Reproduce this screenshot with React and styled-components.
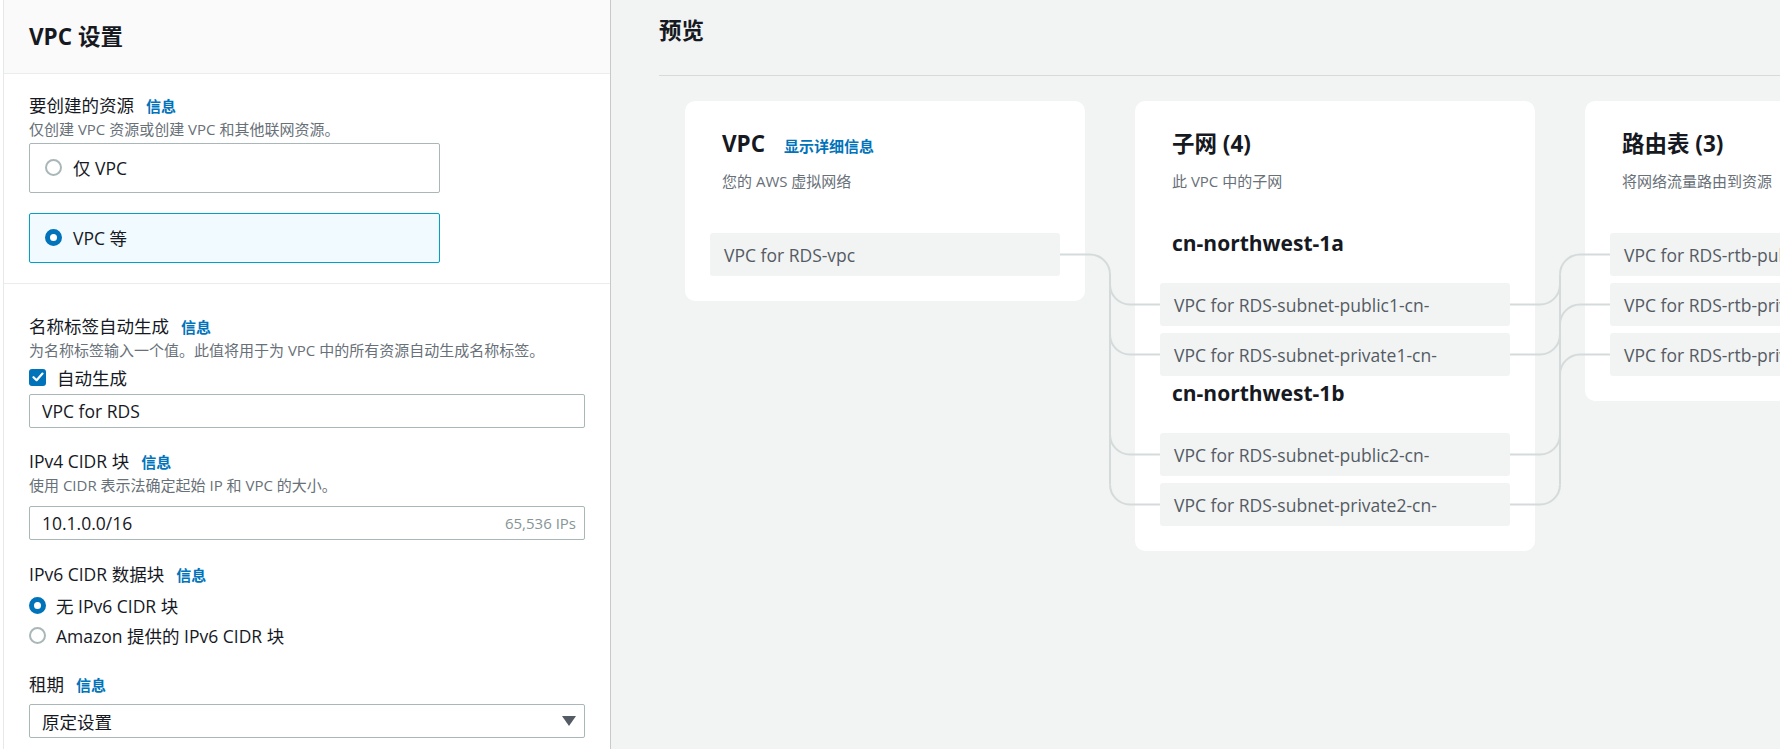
import React from 'react';
import styled, { createGlobalStyle } from 'styled-components';

const GlobalStyle = createGlobalStyle`
  html, body { margin: 0; padding: 0; background: #ffffff; }
  body {
    font-family: "Open Sans", "Noto Sans CJK SC", sans-serif;
    color: #16191f;
  }
  * { box-sizing: border-box; }
`;

const Page = styled.div`
  display: flex;
  width: 1780px;
  height: 749px;
  overflow: hidden;
  padding-left: 3px;
  background: #ffffff;
`;

/* ---------- left form panel ---------- */

const LeftPanel = styled.div`
  width: 608px;
  flex-shrink: 0;
  display: flex;
  flex-direction: column;
  background: #ffffff;
  border-left: 1px solid #e6e9eb;
  border-right: 1px solid #c6cacd;
`;

const PanelHeader = styled.div`
  height: 74px;
  flex-shrink: 0;
  display: flex;
  align-items: center;
  padding: 0 25px;
  background: #fafafa;
  border-bottom: 1px solid #eaeded;
`;

const Heading = styled.h2`
  margin: 0;
  font-size: 22.5px;
  line-height: 30px;
  font-weight: 700;
  color: #16191f;
`;

const Section = styled.div`
  padding: ${(p) => p.$top}px 25px ${(p) => p.$bottom}px;
  border-bottom: ${(p) => (p.$divided ? '1px solid #eaeded' : 'none')};
  display: flex;
  flex-direction: column;
`;

const Field = styled.div`
  display: flex;
  flex-direction: column;
  margin-top: ${(p) => p.$gap || 0}px;
`;

const LabelRow = styled.div`
  display: flex;
  align-items: baseline;
  height: 22px;
`;

const Label = styled.span`
  font-size: 17.5px;
  line-height: 22px;
  color: #16191f;
`;

const InfoLink = styled.a`
  margin-left: 12px;
  font-size: 15px;
  line-height: 22px;
  font-weight: 700;
  color: #0073bb;
  text-decoration: none;
`;

const Desc = styled.div`
  margin-top: 2px;
  font-size: 15px;
  line-height: 22px;
  color: #687078;
`;

const TileGroup = styled.div`
  display: flex;
  flex-direction: column;
  gap: 20px;
  margin-top: 3px;
`;

const Tile = styled.div`
  width: 411px;
  height: 50px;
  display: flex;
  align-items: center;
  gap: 11px;
  padding-left: 15px;
  padding-bottom: 2px;
  border: 1px solid ${(p) => (p.$selected ? '#00a1c9' : '#aab7b8')};
  background: ${(p) => (p.$selected ? '#f1faff' : '#ffffff')};
  border-radius: 2px;
  font-size: 17.5px;
  color: #16191f;
`;

const RadioDot = styled.span`
  width: 17px;
  height: 17px;
  flex-shrink: 0;
  border-radius: 50%;
  background: #ffffff;
  border: ${(p) => (p.$checked ? '5px solid #0073bb' : '2px solid #aab7b8')};
`;

const ChoiceRow = styled.div`
  display: flex;
  align-items: center;
  gap: ${(p) => p.$gap || 10}px;
  height: 22px;
  margin-top: ${(p) => p.$top || 0}px;
  font-size: 17.5px;
  color: #16191f;
`;

const CheckBox = styled.span`
  width: 17px;
  height: 17px;
  flex-shrink: 0;
  border-radius: 3px;
  background: #0073bb;
  display: flex;
  align-items: center;
  justify-content: center;
`;

const InputBox = styled.div`
  width: 100%;
  height: 34px;
  margin-top: ${(p) => p.$top || 0}px;
  display: flex;
  align-items: center;
  justify-content: space-between;
  padding: 0 8px 0 12px;
  border: 1px solid #aab7b8;
  border-radius: 2px;
  background: #ffffff;
`;

const InputText = styled.input`
  flex: 1;
  min-width: 0;
  border: none;
  outline: none;
  padding: 0;
  background: transparent;
  font-family: inherit;
  font-size: 17.5px;
  color: #16191f;
`;

const Suffix = styled.span`
  font-size: 15px;
  color: #879596;
`;

const SelectText = styled.span`
  font-size: 17.5px;
  color: #16191f;
`;

/* ---------- right preview panel ---------- */

const RightPanel = styled.div`
  flex: 1;
  min-width: 0;
  background: #f2f3f3;
  padding-left: 48px;
  overflow: hidden;
`;

const PreviewHeader = styled.div`
  padding: 16px 0 29px;
  border-bottom: 1px solid #d5dbdb;
`;

const Canvas = styled.div`
  position: relative;
  display: flex;
  align-items: flex-start;
  gap: 50px;
  padding: 25px 0 0 26px;
`;

const Wires = styled.svg`
  position: absolute;
  left: 0;
  top: 0;
  overflow: visible;
  pointer-events: none;
`;

const Card = styled.div`
  width: 400px;
  flex-shrink: 0;
  background: #ffffff;
  border-radius: 10px;
  padding: 28px 25px 25px;
`;

const CardHead = styled.div`
  padding: 0 12px;
`;

const TitleRow = styled.div`
  display: flex;
  align-items: baseline;
`;

const DetailLink = styled.a`
  margin-left: 19px;
  font-size: 15px;
  font-weight: 700;
  color: #0073bb;
  text-decoration: none;
`;

const CardDesc = styled.div`
  margin-top: 12px;
  font-size: 15px;
  line-height: 20px;
  color: #687078;
`;

const CardBody = styled.div`
  margin-top: 42px;
  display: flex;
  flex-direction: column;
  gap: 7px;
`;

const ZoneTitle = styled.div`
  padding-left: 12px;
  margin-bottom: 23px;
  font-size: 21px;
  line-height: 20px;
  font-weight: 700;
  color: #16191f;
`;

const Item = styled.div`
  height: 43px;
  display: flex;
  align-items: center;
  padding: 0 14px;
  background: #f2f3f3;
  border-radius: 3px;
  font-size: 17.5px;
  color: #545b64;
  white-space: nowrap;
  overflow: hidden;
`;

/* ---------- connector geometry (canvas coords) ---------- */
const R = 20;
const VPC_Y = [178.5];
const SUBNET_Y = [228.5, 278.5, 378.5, 428.5];
const ROUTE_Y = [178.5, 228.5, 278.5];
const X1 = { from: 401, bus: 451, to: 501 };
const X2 = { from: 851, bus: 901, to: 951 };

function buildPaths() {
  const p = [];
  const vy = VPC_Y[0];
  const lastSub = SUBNET_Y[SUBNET_Y.length - 1];
  p.push(`M${X1.from} ${vy} H${X1.bus - R} A${R} ${R} 0 0 1 ${X1.bus} ${vy + R} V${lastSub - R}`);
  SUBNET_Y.forEach((y) => {
    p.push(`M${X1.bus} ${y - R} A${R} ${R} 0 0 0 ${X1.bus + R} ${y} H${X1.to}`);
    p.push(`M${X2.from} ${y} H${X2.bus - R} A${R} ${R} 0 0 0 ${X2.bus} ${y - R}`);
  });
  p.push(`M${X2.bus} ${ROUTE_Y[0] + R} V${lastSub - R}`);
  ROUTE_Y.forEach((y) => {
    p.push(`M${X2.bus} ${y + R} A${R} ${R} 0 0 1 ${X2.bus + R} ${y} H${X2.to}`);
  });
  return p;
}

const Check = () => (
  <svg width="12" height="10" viewBox="0 0 12 10">
    <path d="M1.5 5.2 L4.6 8.2 L10.5 1.6" fill="none" stroke="#ffffff" strokeWidth="2.2" strokeLinecap="round" strokeLinejoin="round" />
  </svg>
);

const Caret = () => (
  <svg width="14" height="10" viewBox="0 0 14 10">
    <polygon points="0,0 14,0 7,10" fill="#545b64" />
  </svg>
);

const FieldLabel = ({ text }) => (
  <LabelRow>
    <Label>{text}</Label>
    <InfoLink href="#">信息</InfoLink>
  </LabelRow>
);

export default function App() {
  return (
    <>
      <GlobalStyle />
      <Page>
        <LeftPanel>
          <PanelHeader>
            <Heading>VPC 设置</Heading>
          </PanelHeader>

          <Section $top={20} $bottom={20} $divided>
            <FieldLabel text="要创建的资源" />
            <Desc>仅创建 VPC 资源或创建 VPC 和其他联网资源。</Desc>
            <TileGroup>
              <Tile>
                <RadioDot />
                <span>仅 VPC</span>
              </Tile>
              <Tile $selected>
                <RadioDot $checked />
                <span>VPC 等</span>
              </Tile>
            </TileGroup>
          </Section>

          <Section $top={31} $bottom={20}>
            <Field>
              <FieldLabel text="名称标签自动生成" />
              <Desc>为名称标签输入一个值。此值将用于为 VPC 中的所有资源自动生成名称标签。</Desc>
              <ChoiceRow $top={5} $gap={11}>
                <CheckBox>
                  <Check />
                </CheckBox>
                <span>自动生成</span>
              </ChoiceRow>
              <InputBox $top={6}>
                <InputText readOnly defaultValue="VPC for RDS" />
              </InputBox>
            </Field>

            <Field $gap={22}>
              <FieldLabel text="IPv4 CIDR 块" />
              <Desc>使用 CIDR 表示法确定起始 IP 和 VPC 的大小。</Desc>
              <InputBox $top={10}>
                <InputText readOnly defaultValue="10.1.0.0/16" />
                <Suffix>65,536 IPs</Suffix>
              </InputBox>
            </Field>

            <Field $gap={23}>
              <FieldLabel text="IPv6 CIDR 数据块" />
              <ChoiceRow $top={9}>
                <RadioDot $checked />
                <span>无 IPv6 CIDR 块</span>
              </ChoiceRow>
              <ChoiceRow $top={8}>
                <RadioDot />
                <span>Amazon 提供的 IPv6 CIDR 块</span>
              </ChoiceRow>
            </Field>

            <Field $gap={27}>
              <FieldLabel text="租期" />
              <InputBox $top={9}>
                <SelectText>原定设置</SelectText>
                <Caret />
              </InputBox>
            </Field>
          </Section>
        </LeftPanel>

        <RightPanel>
          <PreviewHeader>
            <Heading>预览</Heading>
          </PreviewHeader>

          <Canvas>
            <Card>
              <CardHead>
                <TitleRow>
                  <Heading>VPC</Heading>
                  <DetailLink href="#">显示详细信息</DetailLink>
                </TitleRow>
                <CardDesc>您的 AWS 虚拟网络</CardDesc>
              </CardHead>
              <CardBody>
                <Item>VPC for RDS-vpc</Item>
              </CardBody>
            </Card>

            <Card>
              <CardHead>
                <Heading>子网 (4)</Heading>
                <CardDesc>此 VPC 中的子网</CardDesc>
              </CardHead>
              <CardBody>
                <ZoneTitle>cn-northwest-1a</ZoneTitle>
                <Item>VPC for RDS-subnet-public1-cn-</Item>
                <Item>VPC for RDS-subnet-private1-cn-</Item>
                <ZoneTitle>cn-northwest-1b</ZoneTitle>
                <Item>VPC for RDS-subnet-public2-cn-</Item>
                <Item>VPC for RDS-subnet-private2-cn-</Item>
              </CardBody>
            </Card>

            <Card>
              <CardHead>
                <Heading>路由表 (3)</Heading>
                <CardDesc>将网络流量路由到资源</CardDesc>
              </CardHead>
              <CardBody>
                <Item>VPC for RDS-rtb-public</Item>
                <Item>VPC for RDS-rtb-private1-cn-</Item>
                <Item>VPC for RDS-rtb-private2-cn-</Item>
              </CardBody>
            </Card>

            <Wires width="1300" height="600">
              {buildPaths().map((d, i) => (
                <path key={i} d={d} fill="none" stroke="#d5dbdb" strokeWidth="2" />
              ))}
            </Wires>
          </Canvas>
        </RightPanel>
      </Page>
    </>
  );
}
